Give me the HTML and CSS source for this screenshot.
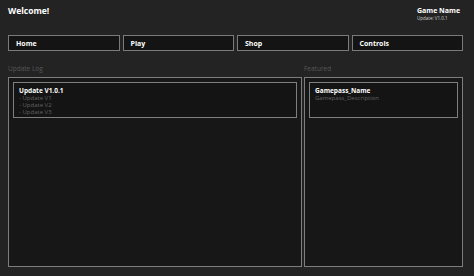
FILE: index.html
```html
<!DOCTYPE html>
<html lang="en">

<head>
    <meta charset="UTF-8">
    <meta name="viewport" content="width=device-width, initial-scale=1.0">
    <title>Game Menu</title>
    <link rel="stylesheet" href="styles.css">
</head>

<body>
    <div class="screen">
        <div class="header">
            <h1 class="welcome">Welcome!</h1>
            <div class="game-info">
                <div class="game-name">Game Name</div>
                <div class="game-version">Update: V1.0.1</div>
            </div>
        </div>

        <div class="nav">
            <button class="nav-btn">Home</button>
            <button class="nav-btn">Play</button>
            <button class="nav-btn">Shop</button>
            <button class="nav-btn">Controls</button>
        </div>

        <div class="sections">
            <div class="section">
                <div class="section-label">Update Log</div>
                <div class="panel">
                    <div class="card">
                        <div class="card-title">Update V1.0.1</div>
                        <div class="card-line">- Update V1</div>
                        <div class="card-line">- Update V2</div>
                        <div class="card-line">- Update V3</div>
                    </div>
                </div>
            </div>
            <div class="section">
                <div class="section-label">Featured</div>
                <div class="panel">
                    <div class="card">
                        <div class="card-title">Gamepass_Name</div>
                        <div class="card-line">Gamepass_Description</div>
                    </div>
                </div>
            </div>
        </div>
    </div>
</body>

</html>
```

FILE: styles.css
```css
body {
    margin: 0;
    background-color: #232323;
    font-family: "Open Sans", "Liberation Sans", sans-serif;
    color: #ffffff;
}

.screen {
    height: 276px;
    padding: 0 11px 0 8px;
    box-sizing: border-box;
    display: flex;
    flex-direction: column;
}

.header {
    display: flex;
    justify-content: space-between;
    align-items: flex-start;
    height: 35px;
}

.welcome {
    margin: 5px 0 0 0;
    font-size: 8.5px;
    font-weight: 700;
    line-height: 12px;
}

.game-info {
    margin: 6px 6px 0 0;
    white-space: nowrap;
    width: 40px;
}

.game-name {
    font-size: 7px;
    font-weight: 700;
    line-height: 10px;
}

.game-version {
    font-size: 4.5px;
    line-height: 5px;
    color: #cfcfcf;
}

.nav {
    display: grid;
    grid-template-columns: repeat(4, 1fr);
    gap: 3px;
}

.nav-btn {
    height: 16px;
    padding: 0 0 0 7px;
    text-align: left;
    background: #141414;
    border: 1px solid #7a7a7a;
    color: #ffffff;
    font-family: "Open Sans", "Liberation Sans", sans-serif;
    font-size: 7px;
    font-weight: 700;
}

.sections {
    display: grid;
    grid-template-columns: 294px 1fr;
    gap: 2px;
    margin-top: 14px;
}

.section-label {
    font-size: 6.5px;
    line-height: 8px;
    color: #575757;
    height: 12px;
}

.panel {
    height: 190px;
    box-sizing: border-box;
    padding: 4px;
    background: #171717;
    border: 1px solid #7e7e7e;
}

.card {
    height: 36px;
    box-sizing: border-box;
    padding: 3px 5px;
    background: #141414;
    border: 1px solid #7e7e7e;
}

.card-title {
    font-size: 6.5px;
    font-weight: 700;
    line-height: 9px;
}

.card-line {
    font-size: 6px;
    line-height: 7px;
    color: #626262;
}
```
